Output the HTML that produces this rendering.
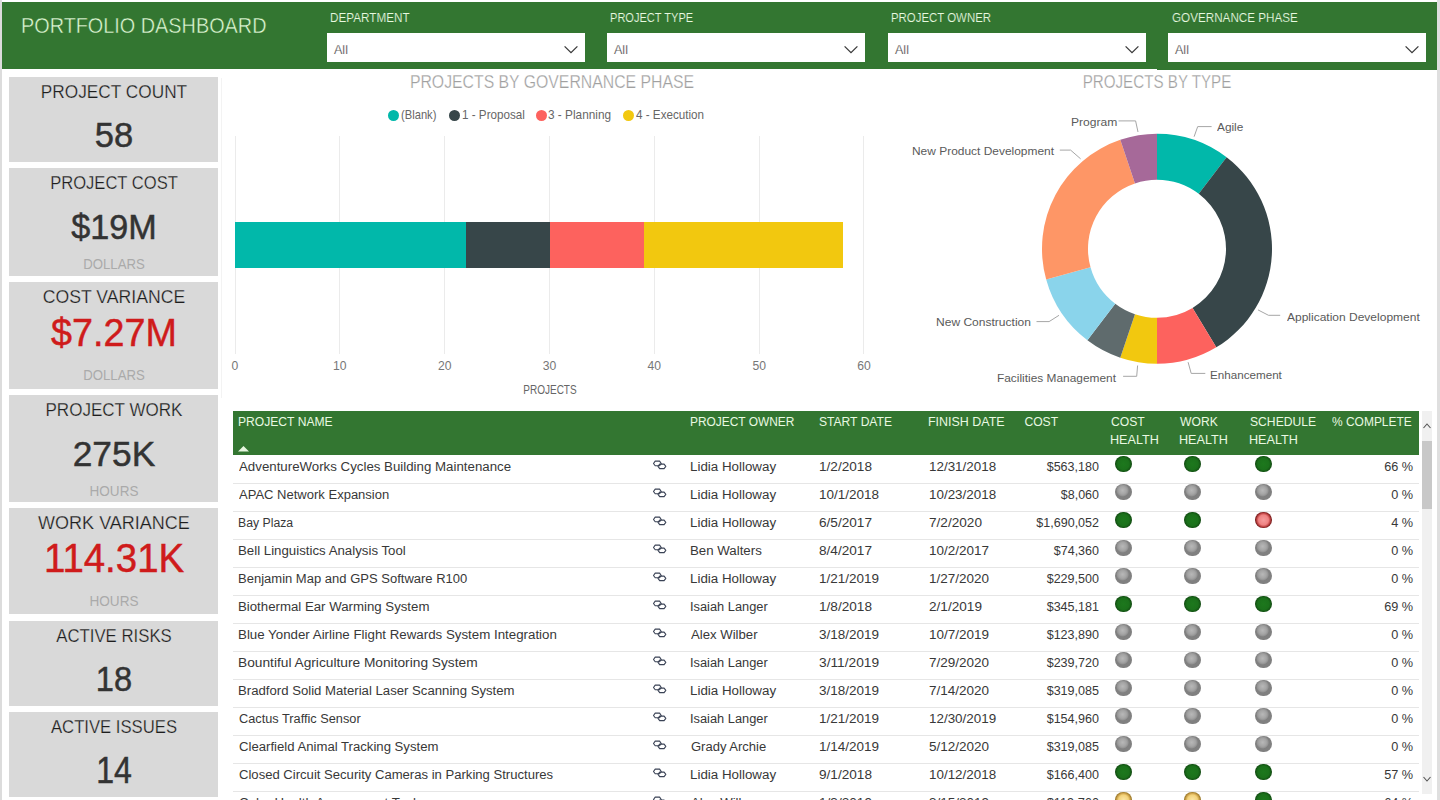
<!DOCTYPE html>
<html><head><meta charset="utf-8"><style>
html,body{margin:0;padding:0;}
body{width:1440px;height:800px;position:relative;overflow:hidden;background:#fff;font-family:"Liberation Sans", sans-serif;}
.t{position:absolute;white-space:nowrap;font-family:"Liberation Sans", sans-serif;}
</style></head><body>
<div style="position:absolute;left:0px;top:0px;width:2px;height:800px;background:#dcdcdc;"></div><div style="position:absolute;left:1437px;top:0px;width:3px;height:800px;background:#dfdfdf;"></div><div style="position:absolute;left:2px;top:2px;width:1435px;height:66.5px;background:#337631;"></div><div style="position:absolute;left:1157px;top:68px;width:280px;height:1.5px;background:#337631;"></div><div class="t" style="left:20.68px;top:14.78px;font-size:21.65px;line-height:21.65px;color:#e0fad6;transform:scaleX(0.9168);transform-origin:left;-webkit-text-stroke:0.45px #337631;paint-order:normal;">PORTFOLIO DASHBOARD</div><div class="t" style="left:329.65px;top:12.03px;font-size:12.29px;line-height:12.29px;color:#e8f9e0;transform:scaleX(0.9545);transform-origin:left;-webkit-text-stroke:0.15px #337631;">DEPARTMENT</div><div style="position:absolute;left:327px;top:33px;width:258px;height:29px;background:#ffffff;"></div><div class="t" style="left:334.00px;top:44.03px;font-size:12.29px;line-height:12.29px;color:#333;transform:scaleX(1.0217);transform-origin:left;-webkit-text-stroke:0.25px #fff;">All</div><svg style="position:absolute;left:561px;top:42px" width="20" height="14" viewBox="0 0 20 14"><path d="M3.6 4.4 L10 10.6 L16.4 4.4" fill="none" stroke="#3a3a3a" stroke-width="1.3"/></svg><div class="t" style="left:609.70px;top:12.03px;font-size:12.29px;line-height:12.29px;color:#e8f9e0;transform:scaleX(0.9005);transform-origin:left;-webkit-text-stroke:0.15px #337631;">PROJECT TYPE</div><div style="position:absolute;left:607px;top:33px;width:258px;height:29px;background:#ffffff;"></div><div class="t" style="left:614.00px;top:44.03px;font-size:12.29px;line-height:12.29px;color:#333;transform:scaleX(1.0217);transform-origin:left;-webkit-text-stroke:0.25px #fff;">All</div><svg style="position:absolute;left:841px;top:42px" width="20" height="14" viewBox="0 0 20 14"><path d="M3.6 4.4 L10 10.6 L16.4 4.4" fill="none" stroke="#3a3a3a" stroke-width="1.3"/></svg><div class="t" style="left:890.67px;top:12.03px;font-size:12.29px;line-height:12.29px;color:#e8f9e0;transform:scaleX(0.9295);transform-origin:left;-webkit-text-stroke:0.15px #337631;">PROJECT OWNER</div><div style="position:absolute;left:888px;top:33px;width:258px;height:29px;background:#ffffff;"></div><div class="t" style="left:895.00px;top:44.03px;font-size:12.29px;line-height:12.29px;color:#333;transform:scaleX(1.0217);transform-origin:left;-webkit-text-stroke:0.25px #fff;">All</div><svg style="position:absolute;left:1122px;top:42px" width="20" height="14" viewBox="0 0 20 14"><path d="M3.6 4.4 L10 10.6 L16.4 4.4" fill="none" stroke="#3a3a3a" stroke-width="1.3"/></svg><div class="t" style="left:1171.60px;top:12.03px;font-size:12.29px;line-height:12.29px;color:#e8f9e0;transform:scaleX(0.9508);transform-origin:left;-webkit-text-stroke:0.15px #337631;">GOVERNANCE PHASE</div><div style="position:absolute;left:1168px;top:33px;width:258px;height:29px;background:#ffffff;"></div><div class="t" style="left:1175.00px;top:44.03px;font-size:12.29px;line-height:12.29px;color:#333;transform:scaleX(1.0217);transform-origin:left;-webkit-text-stroke:0.25px #fff;">All</div><svg style="position:absolute;left:1402px;top:42px" width="20" height="14" viewBox="0 0 20 14"><path d="M3.6 4.4 L10 10.6 L16.4 4.4" fill="none" stroke="#3a3a3a" stroke-width="1.3"/></svg><div style="position:absolute;left:9px;top:77px;width:209px;height:85px;background:#d9d9d9;"></div><div style="position:absolute;left:9px;top:168px;width:209px;height:108px;background:#d9d9d9;"></div><div style="position:absolute;left:9px;top:282px;width:209px;height:107px;background:#d9d9d9;"></div><div style="position:absolute;left:9px;top:395px;width:209px;height:107px;background:#d9d9d9;"></div><div style="position:absolute;left:9px;top:508px;width:209px;height:106px;background:#d9d9d9;"></div><div style="position:absolute;left:9px;top:621px;width:209px;height:85px;background:#d9d9d9;"></div><div style="position:absolute;left:9px;top:712px;width:209px;height:85px;background:#d9d9d9;"></div><div class="t" style="left:-886.50px;width:2000px;text-align:center;top:84.07px;font-size:17.60px;line-height:17.60px;color:#1e1e1e;transform:scaleX(0.9807);transform-origin:center;-webkit-text-stroke:0.25px #d9d9d9;">PROJECT COUNT</div><div class="t" style="left:-886.50px;width:2000px;text-align:center;top:117.85px;font-size:35.75px;line-height:35.75px;color:#333;transform:scaleX(0.9661);transform-origin:center;-webkit-text-stroke:0.5px #333;">58</div><div class="t" style="left:-886.50px;width:2000px;text-align:center;top:175.07px;font-size:17.60px;line-height:17.60px;color:#1e1e1e;transform:scaleX(0.9421);transform-origin:center;-webkit-text-stroke:0.25px #d9d9d9;">PROJECT COST</div><div class="t" style="left:-886.50px;width:2000px;text-align:center;top:210.05px;font-size:35.75px;line-height:35.75px;color:#333;transform:scaleX(0.9556);transform-origin:center;-webkit-text-stroke:0.5px #333;">$19M</div><div class="t" style="left:-886.50px;width:2000px;text-align:center;top:256.39px;font-size:15.36px;line-height:15.36px;color:#aaaaaa;transform:scaleX(0.8572);transform-origin:center;">DOLLARS</div><div class="t" style="left:-886.50px;width:2000px;text-align:center;top:289.07px;font-size:17.60px;line-height:17.60px;color:#1e1e1e;transform:scaleX(1.0018);transform-origin:center;-webkit-text-stroke:0.25px #d9d9d9;">COST VARIANCE</div><div class="t" style="left:-886.50px;width:2000px;text-align:center;top:313.41px;font-size:39.53px;line-height:39.53px;color:#cf1b1b;transform:scaleX(0.9543);transform-origin:center;-webkit-text-stroke:0.5px #cf1b1b;">$7.27M</div><div class="t" style="left:-886.50px;width:2000px;text-align:center;top:367.39px;font-size:15.36px;line-height:15.36px;color:#aaaaaa;transform:scaleX(0.8572);transform-origin:center;">DOLLARS</div><div class="t" style="left:-886.50px;width:2000px;text-align:center;top:401.87px;font-size:17.60px;line-height:17.60px;color:#1e1e1e;transform:scaleX(0.9689);transform-origin:center;-webkit-text-stroke:0.25px #d9d9d9;">PROJECT WORK</div><div class="t" style="left:-886.50px;width:2000px;text-align:center;top:437.27px;font-size:35.61px;line-height:35.61px;color:#333;transform:scaleX(0.9926);transform-origin:center;-webkit-text-stroke:0.5px #333;">275K</div><div class="t" style="left:-886.50px;width:2000px;text-align:center;top:483.19px;font-size:15.36px;line-height:15.36px;color:#aaaaaa;transform:scaleX(0.8797);transform-origin:center;">HOURS</div><div class="t" style="left:-886.50px;width:2000px;text-align:center;top:514.77px;font-size:17.60px;line-height:17.60px;color:#1e1e1e;transform:scaleX(1.0237);transform-origin:center;-webkit-text-stroke:0.25px #d9d9d9;">WORK VARIANCE</div><div class="t" style="left:-886.50px;width:2000px;text-align:center;top:538.81px;font-size:40.22px;line-height:40.22px;color:#cf1b1b;transform:scaleX(0.9547);transform-origin:center;-webkit-text-stroke:0.5px #cf1b1b;">114.31K</div><div class="t" style="left:-886.50px;width:2000px;text-align:center;top:592.99px;font-size:15.36px;line-height:15.36px;color:#aaaaaa;transform:scaleX(0.8834);transform-origin:center;">HOURS</div><div class="t" style="left:-886.50px;width:2000px;text-align:center;top:628.07px;font-size:17.60px;line-height:17.60px;color:#1e1e1e;transform:scaleX(0.9527);transform-origin:center;-webkit-text-stroke:0.25px #d9d9d9;">ACTIVE RISKS</div><div class="t" style="left:-886.50px;width:2000px;text-align:center;top:661.73px;font-size:35.89px;line-height:35.89px;color:#333;transform:scaleX(0.9093);transform-origin:center;-webkit-text-stroke:0.5px #333;">18</div><div class="t" style="left:-886.50px;width:2000px;text-align:center;top:719.07px;font-size:17.60px;line-height:17.60px;color:#1e1e1e;transform:scaleX(0.9483);transform-origin:center;-webkit-text-stroke:0.25px #d9d9d9;">ACTIVE ISSUES</div><div class="t" style="left:-886.50px;width:2000px;text-align:center;top:752.53px;font-size:36.59px;line-height:36.59px;color:#333;transform:scaleX(0.8763);transform-origin:center;-webkit-text-stroke:0.5px #333;">14</div><div class="t" style="left:-448.50px;width:2000px;text-align:center;top:74.39px;font-size:17.46px;line-height:17.46px;color:#a0a0a0;transform:scaleX(0.9061);transform-origin:center;-webkit-text-stroke:0.25px #fff;">PROJECTS BY GOVERNANCE PHASE</div><div style="position:absolute;left:388px;top:109.7px;width:11px;height:11px;border-radius:50%;background:#01b8aa"></div><div class="t" style="left:400.80px;top:109.29px;font-size:12.57px;line-height:12.57px;color:#666;transform:scaleX(0.8897);transform-origin:left;">(Blank)</div><div style="position:absolute;left:448.5px;top:109.7px;width:11px;height:11px;border-radius:50%;background:#374649"></div><div class="t" style="left:461.50px;top:109.29px;font-size:12.57px;line-height:12.57px;color:#666;transform:scaleX(0.9288);transform-origin:left;">1 - Proposal</div><div style="position:absolute;left:535.8px;top:109.7px;width:11px;height:11px;border-radius:50%;background:#fd625e"></div><div class="t" style="left:548.00px;top:109.29px;font-size:12.57px;line-height:12.57px;color:#666;transform:scaleX(0.9405);transform-origin:left;">3 - Planning</div><div style="position:absolute;left:623px;top:109.7px;width:11px;height:11px;border-radius:50%;background:#f2c80f"></div><div class="t" style="left:636.00px;top:109.29px;font-size:12.57px;line-height:12.57px;color:#666;transform:scaleX(0.9283);transform-origin:left;">4 - Execution</div><div style="position:absolute;left:234.50px;top:136px;width:1px;height:218px;background:#ebebeb"></div><div class="t" style="left:-765.00px;width:2000px;text-align:center;top:360.15px;font-size:12.15px;line-height:12.15px;color:#777;">0</div><div style="position:absolute;left:339.33px;top:136px;width:1px;height:218px;background:#ebebeb"></div><div class="t" style="left:-660.17px;width:2000px;text-align:center;top:360.15px;font-size:12.15px;line-height:12.15px;color:#777;">10</div><div style="position:absolute;left:444.16px;top:136px;width:1px;height:218px;background:#ebebeb"></div><div class="t" style="left:-555.34px;width:2000px;text-align:center;top:360.15px;font-size:12.15px;line-height:12.15px;color:#777;">20</div><div style="position:absolute;left:548.99px;top:136px;width:1px;height:218px;background:#ebebeb"></div><div class="t" style="left:-450.51px;width:2000px;text-align:center;top:360.15px;font-size:12.15px;line-height:12.15px;color:#777;">30</div><div style="position:absolute;left:653.82px;top:136px;width:1px;height:218px;background:#ebebeb"></div><div class="t" style="left:-345.68px;width:2000px;text-align:center;top:360.15px;font-size:12.15px;line-height:12.15px;color:#777;">40</div><div style="position:absolute;left:758.65px;top:136px;width:1px;height:218px;background:#ebebeb"></div><div class="t" style="left:-240.85px;width:2000px;text-align:center;top:360.15px;font-size:12.15px;line-height:12.15px;color:#777;">50</div><div style="position:absolute;left:863.48px;top:136px;width:1px;height:218px;background:#ebebeb"></div><div class="t" style="left:-136.02px;width:2000px;text-align:center;top:360.15px;font-size:12.15px;line-height:12.15px;color:#777;">60</div><svg style="position:absolute;left:0;top:0" width="1440" height="800" shape-rendering="crispEdges"><rect x="235.00" y="222" width="231.23" height="46" fill="#01b8aa"/><rect x="465.63" y="222" width="84.47" height="46" fill="#374649"/><rect x="549.50" y="222" width="94.95" height="46" fill="#fd625e"/><rect x="643.85" y="222" width="198.88" height="46" fill="#f2c80f"/></svg><div class="t" style="left:-450.40px;width:2000px;text-align:center;top:384.02px;font-size:12.01px;line-height:12.01px;color:#666;transform:scaleX(0.8328);transform-origin:center;">PROJECTS</div><div class="t" style="left:157.00px;width:2000px;text-align:center;top:74.39px;font-size:17.46px;line-height:17.46px;color:#a0a0a0;transform:scaleX(0.8701);transform-origin:center;-webkit-text-stroke:0.25px #fff;">PROJECTS BY TYPE</div><svg style="position:absolute;left:0;top:0" width="1440" height="800"><path d="M1157.00,133.80 A115,115 0 0 1 1226.60,157.25 L1198.76,193.87 A69,69 0 0 0 1157.00,179.80 Z" fill="#01b8aa"/><path d="M1226.60,157.25 A115,115 0 0 1 1216.29,347.34 L1192.57,307.92 A69,69 0 0 0 1198.76,193.87 Z" fill="#374649"/><path d="M1216.29,347.34 A115,115 0 0 1 1157.00,363.80 L1157.00,317.80 A69,69 0 0 0 1192.57,307.92 Z" fill="#fd625e"/><path d="M1157.00,363.80 A115,115 0 0 1 1120.28,357.78 L1134.97,314.19 A69,69 0 0 0 1157.00,317.80 Z" fill="#f2c80f"/><path d="M1120.28,357.78 A115,115 0 0 1 1087.40,340.35 L1115.24,303.73 A69,69 0 0 0 1134.97,314.19 Z" fill="#5f6b6d"/><path d="M1087.40,340.35 A115,115 0 0 1 1046.19,279.57 L1090.52,267.26 A69,69 0 0 0 1115.24,303.73 Z" fill="#8ad4eb"/><path d="M1046.19,279.57 A115,115 0 0 1 1120.28,139.82 L1134.97,183.41 A69,69 0 0 0 1090.52,267.26 Z" fill="#fe9666"/><path d="M1120.28,139.82 A115,115 0 0 1 1157.00,133.80 L1157.00,179.80 A69,69 0 0 0 1134.97,183.41 Z" fill="#a66999"/></svg><svg style="position:absolute;left:0;top:0" width="1440" height="800"><polyline points="1194.1,136.7 1197.7,126.6 1211.6,126.6" fill="none" stroke="#a6a6a6" stroke-width="1"/><polyline points="1118.5,120.9 1135.6,120.9 1138.0,132.0" fill="none" stroke="#a6a6a6" stroke-width="1"/><polyline points="1059.8,150.1 1070.6,150.1 1080.6,158.8" fill="none" stroke="#a6a6a6" stroke-width="1"/><polyline points="1036.5,321.6 1049.1,321.6 1059.0,315.3" fill="none" stroke="#a6a6a6" stroke-width="1"/><polyline points="1123.1,376.3 1136.7,376.3 1137.6,365.5" fill="none" stroke="#a6a6a6" stroke-width="1"/><polyline points="1258.0,309.9 1268.5,315.3 1280.2,315.3" fill="none" stroke="#a6a6a6" stroke-width="1"/><polyline points="1188.1,362.2 1191.2,373.4 1205.3,373.4" fill="none" stroke="#a6a6a6" stroke-width="1"/></svg><div class="t" style="left:1216.70px;top:122.29px;font-size:11.17px;line-height:11.17px;color:#5a5a5a;transform:scaleX(1.0609);transform-origin:left;">Agile</div><div class="t" style="left:1071.20px;top:117.29px;font-size:11.17px;line-height:11.17px;color:#5a5a5a;transform:scaleX(1.0827);transform-origin:left;">Program</div><div class="t" style="left:911.70px;top:145.99px;font-size:11.17px;line-height:11.17px;color:#5a5a5a;transform:scaleX(1.0704);transform-origin:left;">New Product Development</div><div class="t" style="left:936.25px;top:317.09px;font-size:11.17px;line-height:11.17px;color:#5a5a5a;transform:scaleX(1.0786);transform-origin:left;">New Construction</div><div class="t" style="left:997.30px;top:373.09px;font-size:11.17px;line-height:11.17px;color:#5a5a5a;transform:scaleX(1.0657);transform-origin:left;">Facilities Management</div><div class="t" style="left:1286.50px;top:312.09px;font-size:11.17px;line-height:11.17px;color:#5a5a5a;transform:scaleX(1.0755);transform-origin:left;">Application Development</div><div class="t" style="left:1209.80px;top:369.99px;font-size:11.17px;line-height:11.17px;color:#5a5a5a;transform:scaleX(1.0438);transform-origin:left;">Enhancement</div><div style="position:absolute;left:220.5px;top:78px;width:1px;height:320px;background:#f3f3f3;"></div><div style="position:absolute;left:233px;top:411px;width:1186px;height:44px;background:#337631;"></div><div class="t" style="left:238.00px;top:415.95px;font-size:12.15px;line-height:12.15px;color:#e9f9e2;transform:scaleX(0.9972);transform-origin:left;">PROJECT NAME</div><div class="t" style="left:690.02px;top:415.95px;font-size:12.15px;line-height:12.15px;color:#e9f9e2;transform:scaleX(0.9820);transform-origin:left;">PROJECT OWNER</div><div class="t" style="left:819.00px;top:415.95px;font-size:12.15px;line-height:12.15px;color:#e9f9e2;transform:scaleX(0.9956);transform-origin:left;">START DATE</div><div class="t" style="left:927.97px;top:415.95px;font-size:12.15px;line-height:12.15px;color:#e9f9e2;transform:scaleX(1.0265);transform-origin:left;">FINISH DATE</div><div class="t" style="left:1024.40px;top:415.95px;font-size:12.15px;line-height:12.15px;color:#e9f9e2;">COST</div><div class="t" style="left:1111.00px;top:415.95px;font-size:12.15px;line-height:12.15px;color:#e9f9e2;">COST</div><div class="t" style="left:1109.96px;top:434.35px;font-size:12.15px;line-height:12.15px;color:#e9f9e2;transform:scaleX(1.0392);transform-origin:left;">HEALTH</div><div class="t" style="left:1180.00px;top:415.95px;font-size:12.15px;line-height:12.15px;color:#e9f9e2;">WORK</div><div class="t" style="left:1178.96px;top:434.35px;font-size:12.15px;line-height:12.15px;color:#e9f9e2;transform:scaleX(1.0392);transform-origin:left;">HEALTH</div><div class="t" style="left:1250.00px;top:415.95px;font-size:12.15px;line-height:12.15px;color:#e9f9e2;">SCHEDULE</div><div class="t" style="left:1248.96px;top:434.35px;font-size:12.15px;line-height:12.15px;color:#e9f9e2;transform:scaleX(1.0392);transform-origin:left;">HEALTH</div><div class="t" style="left:1331.70px;top:415.95px;font-size:12.15px;line-height:12.15px;color:#e9f9e2;transform:scaleX(0.9857);transform-origin:left;">% COMPLETE</div><svg style="position:absolute;left:237px;top:445px" width="13" height="7" viewBox="0 0 13 7"><path d="M1 6.5 L6.5 1 L12 6.5 Z" fill="#e6f6df"/></svg><div class="t" style="left:238.75px;top:460.57px;font-size:12.71px;line-height:12.71px;color:#383838;transform:scaleX(1.0451);transform-origin:left;">AdventureWorks Cycles Building Maintenance</div><svg style="position:absolute;left:651.5px;top:459.5px" width="16" height="11" viewBox="0 0 16 11"><path d="M3.2 1.1 H7.6 L9.3 3.45 L7.6 5.8 H3.2 L1.5 3.45 Z" fill="none" stroke="#3b4356" stroke-width="1.1" stroke-linejoin="round"/><path d="M7.7 4.1 H12.1 L13.8 6.35 L12.1 8.6 H7.7 L6 6.35 Z" fill="none" stroke="#3b4356" stroke-width="1.1" stroke-linejoin="round"/></svg><div class="t" style="left:690.25px;top:460.57px;font-size:12.71px;line-height:12.71px;color:#383838;transform:scaleX(1.0508);transform-origin:left;">Lidia Holloway</div><div class="t" style="left:819.10px;top:460.57px;font-size:12.71px;line-height:12.71px;color:#383838;transform:scaleX(1.0707);transform-origin:left;">1/2/2018</div><div class="t" style="left:929.20px;top:460.57px;font-size:12.71px;line-height:12.71px;color:#383838;transform:scaleX(1.0554);transform-origin:left;">12/31/2018</div><div class="t" style="left:-900.74px;width:2000px;text-align:right;top:460.57px;font-size:12.71px;line-height:12.71px;color:#383838;transform:scaleX(0.9879);transform-origin:right;">$563,180</div><div style="position:absolute;left:1115.00px;top:455.60px;width:16.8px;height:16.8px;border-radius:50%;background:radial-gradient(circle closest-side at 50% 50%, #1d781d 0%, #1b711b 70%, #165e16 90%, #124d12 100%)"></div><div style="position:absolute;left:1183.90px;top:455.60px;width:16.8px;height:16.8px;border-radius:50%;background:radial-gradient(circle closest-side at 50% 50%, #1d781d 0%, #1b711b 70%, #165e16 90%, #124d12 100%)"></div><div style="position:absolute;left:1254.90px;top:455.60px;width:16.8px;height:16.8px;border-radius:50%;background:radial-gradient(circle closest-side at 50% 50%, #1d781d 0%, #1b711b 70%, #165e16 90%, #124d12 100%)"></div><div class="t" style="left:-586.92px;width:2000px;text-align:right;top:460.57px;font-size:12.71px;line-height:12.71px;color:#383838;">66 %</div><div style="position:absolute;left:233px;top:483px;width:1186px;height:1px;background:#e6e6e6;"></div><div class="t" style="left:238.75px;top:488.57px;font-size:12.71px;line-height:12.71px;color:#383838;transform:scaleX(1.0247);transform-origin:left;">APAC Network Expansion</div><svg style="position:absolute;left:651.5px;top:487.5px" width="16" height="11" viewBox="0 0 16 11"><path d="M3.2 1.1 H7.6 L9.3 3.45 L7.6 5.8 H3.2 L1.5 3.45 Z" fill="none" stroke="#3b4356" stroke-width="1.1" stroke-linejoin="round"/><path d="M7.7 4.1 H12.1 L13.8 6.35 L12.1 8.6 H7.7 L6 6.35 Z" fill="none" stroke="#3b4356" stroke-width="1.1" stroke-linejoin="round"/></svg><div class="t" style="left:690.25px;top:488.57px;font-size:12.71px;line-height:12.71px;color:#383838;transform:scaleX(1.0508);transform-origin:left;">Lidia Holloway</div><div class="t" style="left:819.10px;top:488.57px;font-size:12.71px;line-height:12.71px;color:#383838;transform:scaleX(1.0621);transform-origin:left;">10/1/2018</div><div class="t" style="left:929.20px;top:488.57px;font-size:12.71px;line-height:12.71px;color:#383838;transform:scaleX(1.0554);transform-origin:left;">10/23/2018</div><div class="t" style="left:-900.74px;width:2000px;text-align:right;top:488.57px;font-size:12.71px;line-height:12.71px;color:#383838;transform:scaleX(0.9827);transform-origin:right;">$8,060</div><div style="position:absolute;left:1115.00px;top:483.60px;width:16.8px;height:16.8px;border-radius:50%;background:radial-gradient(circle closest-side at 45% 40%, #b8b8b8 0%, #a5a5a5 60%, #949494 85%, #808080 100%)"></div><div style="position:absolute;left:1183.90px;top:483.60px;width:16.8px;height:16.8px;border-radius:50%;background:radial-gradient(circle closest-side at 45% 40%, #b8b8b8 0%, #a5a5a5 60%, #949494 85%, #808080 100%)"></div><div style="position:absolute;left:1254.90px;top:483.60px;width:16.8px;height:16.8px;border-radius:50%;background:radial-gradient(circle closest-side at 45% 40%, #b8b8b8 0%, #a5a5a5 60%, #949494 85%, #808080 100%)"></div><div class="t" style="left:-586.92px;width:2000px;text-align:right;top:488.57px;font-size:12.71px;line-height:12.71px;color:#383838;">0 %</div><div style="position:absolute;left:233px;top:511px;width:1186px;height:1px;background:#e6e6e6;"></div><div class="t" style="left:237.79px;top:516.57px;font-size:12.71px;line-height:12.71px;color:#383838;transform:scaleX(0.9638);transform-origin:left;">Bay Plaza</div><svg style="position:absolute;left:651.5px;top:515.5px" width="16" height="11" viewBox="0 0 16 11"><path d="M3.2 1.1 H7.6 L9.3 3.45 L7.6 5.8 H3.2 L1.5 3.45 Z" fill="none" stroke="#3b4356" stroke-width="1.1" stroke-linejoin="round"/><path d="M7.7 4.1 H12.1 L13.8 6.35 L12.1 8.6 H7.7 L6 6.35 Z" fill="none" stroke="#3b4356" stroke-width="1.1" stroke-linejoin="round"/></svg><div class="t" style="left:690.25px;top:516.57px;font-size:12.71px;line-height:12.71px;color:#383838;transform:scaleX(1.0508);transform-origin:left;">Lidia Holloway</div><div class="t" style="left:819.10px;top:516.57px;font-size:12.71px;line-height:12.71px;color:#383838;transform:scaleX(1.0707);transform-origin:left;">6/5/2017</div><div class="t" style="left:929.20px;top:516.57px;font-size:12.71px;line-height:12.71px;color:#383838;transform:scaleX(1.0707);transform-origin:left;">7/2/2020</div><div class="t" style="left:-900.74px;width:2000px;text-align:right;top:516.57px;font-size:12.71px;line-height:12.71px;color:#383838;transform:scaleX(0.9858);transform-origin:right;">$1,690,052</div><div style="position:absolute;left:1115.00px;top:511.60px;width:16.8px;height:16.8px;border-radius:50%;background:radial-gradient(circle closest-side at 50% 50%, #1d781d 0%, #1b711b 70%, #165e16 90%, #124d12 100%)"></div><div style="position:absolute;left:1183.90px;top:511.60px;width:16.8px;height:16.8px;border-radius:50%;background:radial-gradient(circle closest-side at 50% 50%, #1d781d 0%, #1b711b 70%, #165e16 90%, #124d12 100%)"></div><div style="position:absolute;left:1254.90px;top:511.60px;width:16.8px;height:16.8px;border-radius:50%;background:radial-gradient(circle closest-side at 50% 50%, #f59c9c 0%, #ef8282 62%, #c04545 84%, #7a1c1c 100%)"></div><div class="t" style="left:-586.92px;width:2000px;text-align:right;top:516.57px;font-size:12.71px;line-height:12.71px;color:#383838;">4 %</div><div style="position:absolute;left:233px;top:539px;width:1186px;height:1px;background:#e6e6e6;"></div><div class="t" style="left:237.71px;top:544.57px;font-size:12.71px;line-height:12.71px;color:#383838;transform:scaleX(1.0437);transform-origin:left;">Bell Linguistics Analysis Tool</div><svg style="position:absolute;left:651.5px;top:543.5px" width="16" height="11" viewBox="0 0 16 11"><path d="M3.2 1.1 H7.6 L9.3 3.45 L7.6 5.8 H3.2 L1.5 3.45 Z" fill="none" stroke="#3b4356" stroke-width="1.1" stroke-linejoin="round"/><path d="M7.7 4.1 H12.1 L13.8 6.35 L12.1 8.6 H7.7 L6 6.35 Z" fill="none" stroke="#3b4356" stroke-width="1.1" stroke-linejoin="round"/></svg><div class="t" style="left:690.26px;top:544.57px;font-size:12.71px;line-height:12.71px;color:#383838;transform:scaleX(1.0448);transform-origin:left;">Ben Walters</div><div class="t" style="left:819.10px;top:544.57px;font-size:12.71px;line-height:12.71px;color:#383838;transform:scaleX(1.0707);transform-origin:left;">8/4/2017</div><div class="t" style="left:929.20px;top:544.57px;font-size:12.71px;line-height:12.71px;color:#383838;transform:scaleX(1.0621);transform-origin:left;">10/2/2017</div><div class="t" style="left:-900.74px;width:2000px;text-align:right;top:544.57px;font-size:12.71px;line-height:12.71px;color:#383838;transform:scaleX(0.9857);transform-origin:right;">$74,360</div><div style="position:absolute;left:1115.00px;top:539.60px;width:16.8px;height:16.8px;border-radius:50%;background:radial-gradient(circle closest-side at 45% 40%, #b8b8b8 0%, #a5a5a5 60%, #949494 85%, #808080 100%)"></div><div style="position:absolute;left:1183.90px;top:539.60px;width:16.8px;height:16.8px;border-radius:50%;background:radial-gradient(circle closest-side at 45% 40%, #b8b8b8 0%, #a5a5a5 60%, #949494 85%, #808080 100%)"></div><div style="position:absolute;left:1254.90px;top:539.60px;width:16.8px;height:16.8px;border-radius:50%;background:radial-gradient(circle closest-side at 45% 40%, #b8b8b8 0%, #a5a5a5 60%, #949494 85%, #808080 100%)"></div><div class="t" style="left:-586.92px;width:2000px;text-align:right;top:544.57px;font-size:12.71px;line-height:12.71px;color:#383838;">0 %</div><div style="position:absolute;left:233px;top:567px;width:1186px;height:1px;background:#e6e6e6;"></div><div class="t" style="left:237.73px;top:572.57px;font-size:12.71px;line-height:12.71px;color:#383838;transform:scaleX(1.0245);transform-origin:left;">Benjamin Map and GPS Software R100</div><svg style="position:absolute;left:651.5px;top:571.5px" width="16" height="11" viewBox="0 0 16 11"><path d="M3.2 1.1 H7.6 L9.3 3.45 L7.6 5.8 H3.2 L1.5 3.45 Z" fill="none" stroke="#3b4356" stroke-width="1.1" stroke-linejoin="round"/><path d="M7.7 4.1 H12.1 L13.8 6.35 L12.1 8.6 H7.7 L6 6.35 Z" fill="none" stroke="#3b4356" stroke-width="1.1" stroke-linejoin="round"/></svg><div class="t" style="left:690.25px;top:572.57px;font-size:12.71px;line-height:12.71px;color:#383838;transform:scaleX(1.0508);transform-origin:left;">Lidia Holloway</div><div class="t" style="left:819.10px;top:572.57px;font-size:12.71px;line-height:12.71px;color:#383838;transform:scaleX(1.0621);transform-origin:left;">1/21/2019</div><div class="t" style="left:929.20px;top:572.57px;font-size:12.71px;line-height:12.71px;color:#383838;transform:scaleX(1.0621);transform-origin:left;">1/27/2020</div><div class="t" style="left:-900.74px;width:2000px;text-align:right;top:572.57px;font-size:12.71px;line-height:12.71px;color:#383838;transform:scaleX(0.9879);transform-origin:right;">$229,500</div><div style="position:absolute;left:1115.00px;top:567.60px;width:16.8px;height:16.8px;border-radius:50%;background:radial-gradient(circle closest-side at 45% 40%, #b8b8b8 0%, #a5a5a5 60%, #949494 85%, #808080 100%)"></div><div style="position:absolute;left:1183.90px;top:567.60px;width:16.8px;height:16.8px;border-radius:50%;background:radial-gradient(circle closest-side at 45% 40%, #b8b8b8 0%, #a5a5a5 60%, #949494 85%, #808080 100%)"></div><div style="position:absolute;left:1254.90px;top:567.60px;width:16.8px;height:16.8px;border-radius:50%;background:radial-gradient(circle closest-side at 45% 40%, #b8b8b8 0%, #a5a5a5 60%, #949494 85%, #808080 100%)"></div><div class="t" style="left:-586.92px;width:2000px;text-align:right;top:572.57px;font-size:12.71px;line-height:12.71px;color:#383838;">0 %</div><div style="position:absolute;left:233px;top:595px;width:1186px;height:1px;background:#e6e6e6;"></div><div class="t" style="left:237.71px;top:600.57px;font-size:12.71px;line-height:12.71px;color:#383838;transform:scaleX(1.0416);transform-origin:left;">Biothermal Ear Warming System</div><svg style="position:absolute;left:651.5px;top:599.5px" width="16" height="11" viewBox="0 0 16 11"><path d="M3.2 1.1 H7.6 L9.3 3.45 L7.6 5.8 H3.2 L1.5 3.45 Z" fill="none" stroke="#3b4356" stroke-width="1.1" stroke-linejoin="round"/><path d="M7.7 4.1 H12.1 L13.8 6.35 L12.1 8.6 H7.7 L6 6.35 Z" fill="none" stroke="#3b4356" stroke-width="1.1" stroke-linejoin="round"/></svg><div class="t" style="left:690.29px;top:600.57px;font-size:12.71px;line-height:12.71px;color:#383838;transform:scaleX(1.0096);transform-origin:left;">Isaiah Langer</div><div class="t" style="left:819.10px;top:600.57px;font-size:12.71px;line-height:12.71px;color:#383838;transform:scaleX(1.0707);transform-origin:left;">1/8/2018</div><div class="t" style="left:929.20px;top:600.57px;font-size:12.71px;line-height:12.71px;color:#383838;transform:scaleX(1.0707);transform-origin:left;">2/1/2019</div><div class="t" style="left:-900.74px;width:2000px;text-align:right;top:600.57px;font-size:12.71px;line-height:12.71px;color:#383838;transform:scaleX(0.9879);transform-origin:right;">$345,181</div><div style="position:absolute;left:1115.00px;top:595.60px;width:16.8px;height:16.8px;border-radius:50%;background:radial-gradient(circle closest-side at 50% 50%, #1d781d 0%, #1b711b 70%, #165e16 90%, #124d12 100%)"></div><div style="position:absolute;left:1183.90px;top:595.60px;width:16.8px;height:16.8px;border-radius:50%;background:radial-gradient(circle closest-side at 50% 50%, #1d781d 0%, #1b711b 70%, #165e16 90%, #124d12 100%)"></div><div style="position:absolute;left:1254.90px;top:595.60px;width:16.8px;height:16.8px;border-radius:50%;background:radial-gradient(circle closest-side at 50% 50%, #1d781d 0%, #1b711b 70%, #165e16 90%, #124d12 100%)"></div><div class="t" style="left:-586.92px;width:2000px;text-align:right;top:600.57px;font-size:12.71px;line-height:12.71px;color:#383838;">69 %</div><div style="position:absolute;left:233px;top:623px;width:1186px;height:1px;background:#e6e6e6;"></div><div class="t" style="left:237.70px;top:628.57px;font-size:12.71px;line-height:12.71px;color:#383838;transform:scaleX(1.0478);transform-origin:left;">Blue Yonder Airline Flight Rewards System Integration</div><svg style="position:absolute;left:651.5px;top:627.5px" width="16" height="11" viewBox="0 0 16 11"><path d="M3.2 1.1 H7.6 L9.3 3.45 L7.6 5.8 H3.2 L1.5 3.45 Z" fill="none" stroke="#3b4356" stroke-width="1.1" stroke-linejoin="round"/><path d="M7.7 4.1 H12.1 L13.8 6.35 L12.1 8.6 H7.7 L6 6.35 Z" fill="none" stroke="#3b4356" stroke-width="1.1" stroke-linejoin="round"/></svg><div class="t" style="left:691.30px;top:628.57px;font-size:12.71px;line-height:12.71px;color:#383838;transform:scaleX(1.0365);transform-origin:left;">Alex Wilber</div><div class="t" style="left:819.10px;top:628.57px;font-size:12.71px;line-height:12.71px;color:#383838;transform:scaleX(1.0621);transform-origin:left;">3/18/2019</div><div class="t" style="left:929.20px;top:628.57px;font-size:12.71px;line-height:12.71px;color:#383838;transform:scaleX(1.0621);transform-origin:left;">10/7/2019</div><div class="t" style="left:-900.74px;width:2000px;text-align:right;top:628.57px;font-size:12.71px;line-height:12.71px;color:#383838;transform:scaleX(0.9879);transform-origin:right;">$123,890</div><div style="position:absolute;left:1115.00px;top:623.60px;width:16.8px;height:16.8px;border-radius:50%;background:radial-gradient(circle closest-side at 45% 40%, #b8b8b8 0%, #a5a5a5 60%, #949494 85%, #808080 100%)"></div><div style="position:absolute;left:1183.90px;top:623.60px;width:16.8px;height:16.8px;border-radius:50%;background:radial-gradient(circle closest-side at 45% 40%, #b8b8b8 0%, #a5a5a5 60%, #949494 85%, #808080 100%)"></div><div style="position:absolute;left:1254.90px;top:623.60px;width:16.8px;height:16.8px;border-radius:50%;background:radial-gradient(circle closest-side at 45% 40%, #b8b8b8 0%, #a5a5a5 60%, #949494 85%, #808080 100%)"></div><div class="t" style="left:-586.92px;width:2000px;text-align:right;top:628.57px;font-size:12.71px;line-height:12.71px;color:#383838;">0 %</div><div style="position:absolute;left:233px;top:651px;width:1186px;height:1px;background:#e6e6e6;"></div><div class="t" style="left:237.67px;top:656.57px;font-size:12.71px;line-height:12.71px;color:#383838;transform:scaleX(1.0807);transform-origin:left;">Bountiful Agriculture Monitoring System</div><svg style="position:absolute;left:651.5px;top:655.5px" width="16" height="11" viewBox="0 0 16 11"><path d="M3.2 1.1 H7.6 L9.3 3.45 L7.6 5.8 H3.2 L1.5 3.45 Z" fill="none" stroke="#3b4356" stroke-width="1.1" stroke-linejoin="round"/><path d="M7.7 4.1 H12.1 L13.8 6.35 L12.1 8.6 H7.7 L6 6.35 Z" fill="none" stroke="#3b4356" stroke-width="1.1" stroke-linejoin="round"/></svg><div class="t" style="left:690.29px;top:656.57px;font-size:12.71px;line-height:12.71px;color:#383838;transform:scaleX(1.0096);transform-origin:left;">Isaiah Langer</div><div class="t" style="left:819.10px;top:656.57px;font-size:12.71px;line-height:12.71px;color:#383838;transform:scaleX(1.0802);transform-origin:left;">3/11/2019</div><div class="t" style="left:929.20px;top:656.57px;font-size:12.71px;line-height:12.71px;color:#383838;transform:scaleX(1.0621);transform-origin:left;">7/29/2020</div><div class="t" style="left:-900.74px;width:2000px;text-align:right;top:656.57px;font-size:12.71px;line-height:12.71px;color:#383838;transform:scaleX(0.9879);transform-origin:right;">$239,720</div><div style="position:absolute;left:1115.00px;top:651.60px;width:16.8px;height:16.8px;border-radius:50%;background:radial-gradient(circle closest-side at 45% 40%, #b8b8b8 0%, #a5a5a5 60%, #949494 85%, #808080 100%)"></div><div style="position:absolute;left:1183.90px;top:651.60px;width:16.8px;height:16.8px;border-radius:50%;background:radial-gradient(circle closest-side at 45% 40%, #b8b8b8 0%, #a5a5a5 60%, #949494 85%, #808080 100%)"></div><div style="position:absolute;left:1254.90px;top:651.60px;width:16.8px;height:16.8px;border-radius:50%;background:radial-gradient(circle closest-side at 45% 40%, #b8b8b8 0%, #a5a5a5 60%, #949494 85%, #808080 100%)"></div><div class="t" style="left:-586.92px;width:2000px;text-align:right;top:656.57px;font-size:12.71px;line-height:12.71px;color:#383838;">0 %</div><div style="position:absolute;left:233px;top:679px;width:1186px;height:1px;background:#e6e6e6;"></div><div class="t" style="left:237.71px;top:684.57px;font-size:12.71px;line-height:12.71px;color:#383838;transform:scaleX(1.0360);transform-origin:left;">Bradford Solid Material Laser Scanning System</div><svg style="position:absolute;left:651.5px;top:683.5px" width="16" height="11" viewBox="0 0 16 11"><path d="M3.2 1.1 H7.6 L9.3 3.45 L7.6 5.8 H3.2 L1.5 3.45 Z" fill="none" stroke="#3b4356" stroke-width="1.1" stroke-linejoin="round"/><path d="M7.7 4.1 H12.1 L13.8 6.35 L12.1 8.6 H7.7 L6 6.35 Z" fill="none" stroke="#3b4356" stroke-width="1.1" stroke-linejoin="round"/></svg><div class="t" style="left:690.25px;top:684.57px;font-size:12.71px;line-height:12.71px;color:#383838;transform:scaleX(1.0508);transform-origin:left;">Lidia Holloway</div><div class="t" style="left:819.10px;top:684.57px;font-size:12.71px;line-height:12.71px;color:#383838;transform:scaleX(1.0621);transform-origin:left;">3/18/2019</div><div class="t" style="left:929.20px;top:684.57px;font-size:12.71px;line-height:12.71px;color:#383838;transform:scaleX(1.0621);transform-origin:left;">7/14/2020</div><div class="t" style="left:-900.74px;width:2000px;text-align:right;top:684.57px;font-size:12.71px;line-height:12.71px;color:#383838;transform:scaleX(0.9879);transform-origin:right;">$319,085</div><div style="position:absolute;left:1115.00px;top:679.60px;width:16.8px;height:16.8px;border-radius:50%;background:radial-gradient(circle closest-side at 45% 40%, #b8b8b8 0%, #a5a5a5 60%, #949494 85%, #808080 100%)"></div><div style="position:absolute;left:1183.90px;top:679.60px;width:16.8px;height:16.8px;border-radius:50%;background:radial-gradient(circle closest-side at 45% 40%, #b8b8b8 0%, #a5a5a5 60%, #949494 85%, #808080 100%)"></div><div style="position:absolute;left:1254.90px;top:679.60px;width:16.8px;height:16.8px;border-radius:50%;background:radial-gradient(circle closest-side at 45% 40%, #b8b8b8 0%, #a5a5a5 60%, #949494 85%, #808080 100%)"></div><div class="t" style="left:-586.92px;width:2000px;text-align:right;top:684.57px;font-size:12.71px;line-height:12.71px;color:#383838;">0 %</div><div style="position:absolute;left:233px;top:707px;width:1186px;height:1px;background:#e6e6e6;"></div><div class="t" style="left:238.75px;top:712.57px;font-size:12.71px;line-height:12.71px;color:#383838;transform:scaleX(1.0036);transform-origin:left;">Cactus Traffic Sensor</div><svg style="position:absolute;left:651.5px;top:711.5px" width="16" height="11" viewBox="0 0 16 11"><path d="M3.2 1.1 H7.6 L9.3 3.45 L7.6 5.8 H3.2 L1.5 3.45 Z" fill="none" stroke="#3b4356" stroke-width="1.1" stroke-linejoin="round"/><path d="M7.7 4.1 H12.1 L13.8 6.35 L12.1 8.6 H7.7 L6 6.35 Z" fill="none" stroke="#3b4356" stroke-width="1.1" stroke-linejoin="round"/></svg><div class="t" style="left:690.29px;top:712.57px;font-size:12.71px;line-height:12.71px;color:#383838;transform:scaleX(1.0096);transform-origin:left;">Isaiah Langer</div><div class="t" style="left:819.10px;top:712.57px;font-size:12.71px;line-height:12.71px;color:#383838;transform:scaleX(1.0621);transform-origin:left;">1/21/2019</div><div class="t" style="left:929.20px;top:712.57px;font-size:12.71px;line-height:12.71px;color:#383838;transform:scaleX(1.0554);transform-origin:left;">12/30/2019</div><div class="t" style="left:-900.74px;width:2000px;text-align:right;top:712.57px;font-size:12.71px;line-height:12.71px;color:#383838;transform:scaleX(0.9879);transform-origin:right;">$154,960</div><div style="position:absolute;left:1115.00px;top:707.60px;width:16.8px;height:16.8px;border-radius:50%;background:radial-gradient(circle closest-side at 45% 40%, #b8b8b8 0%, #a5a5a5 60%, #949494 85%, #808080 100%)"></div><div style="position:absolute;left:1183.90px;top:707.60px;width:16.8px;height:16.8px;border-radius:50%;background:radial-gradient(circle closest-side at 45% 40%, #b8b8b8 0%, #a5a5a5 60%, #949494 85%, #808080 100%)"></div><div style="position:absolute;left:1254.90px;top:707.60px;width:16.8px;height:16.8px;border-radius:50%;background:radial-gradient(circle closest-side at 45% 40%, #b8b8b8 0%, #a5a5a5 60%, #949494 85%, #808080 100%)"></div><div class="t" style="left:-586.92px;width:2000px;text-align:right;top:712.57px;font-size:12.71px;line-height:12.71px;color:#383838;">0 %</div><div style="position:absolute;left:233px;top:735px;width:1186px;height:1px;background:#e6e6e6;"></div><div class="t" style="left:238.75px;top:740.57px;font-size:12.71px;line-height:12.71px;color:#383838;transform:scaleX(1.0347);transform-origin:left;">Clearfield Animal Tracking System</div><svg style="position:absolute;left:651.5px;top:739.5px" width="16" height="11" viewBox="0 0 16 11"><path d="M3.2 1.1 H7.6 L9.3 3.45 L7.6 5.8 H3.2 L1.5 3.45 Z" fill="none" stroke="#3b4356" stroke-width="1.1" stroke-linejoin="round"/><path d="M7.7 4.1 H12.1 L13.8 6.35 L12.1 8.6 H7.7 L6 6.35 Z" fill="none" stroke="#3b4356" stroke-width="1.1" stroke-linejoin="round"/></svg><div class="t" style="left:691.30px;top:740.57px;font-size:12.71px;line-height:12.71px;color:#383838;transform:scaleX(1.0246);transform-origin:left;">Grady Archie</div><div class="t" style="left:819.10px;top:740.57px;font-size:12.71px;line-height:12.71px;color:#383838;transform:scaleX(1.0621);transform-origin:left;">1/14/2019</div><div class="t" style="left:929.20px;top:740.57px;font-size:12.71px;line-height:12.71px;color:#383838;transform:scaleX(1.0621);transform-origin:left;">5/12/2020</div><div class="t" style="left:-900.74px;width:2000px;text-align:right;top:740.57px;font-size:12.71px;line-height:12.71px;color:#383838;transform:scaleX(0.9879);transform-origin:right;">$319,085</div><div style="position:absolute;left:1115.00px;top:735.60px;width:16.8px;height:16.8px;border-radius:50%;background:radial-gradient(circle closest-side at 45% 40%, #b8b8b8 0%, #a5a5a5 60%, #949494 85%, #808080 100%)"></div><div style="position:absolute;left:1183.90px;top:735.60px;width:16.8px;height:16.8px;border-radius:50%;background:radial-gradient(circle closest-side at 45% 40%, #b8b8b8 0%, #a5a5a5 60%, #949494 85%, #808080 100%)"></div><div style="position:absolute;left:1254.90px;top:735.60px;width:16.8px;height:16.8px;border-radius:50%;background:radial-gradient(circle closest-side at 45% 40%, #b8b8b8 0%, #a5a5a5 60%, #949494 85%, #808080 100%)"></div><div class="t" style="left:-586.92px;width:2000px;text-align:right;top:740.57px;font-size:12.71px;line-height:12.71px;color:#383838;">0 %</div><div style="position:absolute;left:233px;top:763px;width:1186px;height:1px;background:#e6e6e6;"></div><div class="t" style="left:238.75px;top:768.57px;font-size:12.71px;line-height:12.71px;color:#383838;transform:scaleX(1.0299);transform-origin:left;">Closed Circuit Security Cameras in Parking Structures</div><svg style="position:absolute;left:651.5px;top:767.5px" width="16" height="11" viewBox="0 0 16 11"><path d="M3.2 1.1 H7.6 L9.3 3.45 L7.6 5.8 H3.2 L1.5 3.45 Z" fill="none" stroke="#3b4356" stroke-width="1.1" stroke-linejoin="round"/><path d="M7.7 4.1 H12.1 L13.8 6.35 L12.1 8.6 H7.7 L6 6.35 Z" fill="none" stroke="#3b4356" stroke-width="1.1" stroke-linejoin="round"/></svg><div class="t" style="left:690.25px;top:768.57px;font-size:12.71px;line-height:12.71px;color:#383838;transform:scaleX(1.0508);transform-origin:left;">Lidia Holloway</div><div class="t" style="left:819.10px;top:768.57px;font-size:12.71px;line-height:12.71px;color:#383838;transform:scaleX(1.0707);transform-origin:left;">9/1/2018</div><div class="t" style="left:929.20px;top:768.57px;font-size:12.71px;line-height:12.71px;color:#383838;transform:scaleX(1.0554);transform-origin:left;">10/12/2018</div><div class="t" style="left:-900.74px;width:2000px;text-align:right;top:768.57px;font-size:12.71px;line-height:12.71px;color:#383838;transform:scaleX(0.9879);transform-origin:right;">$166,400</div><div style="position:absolute;left:1115.00px;top:763.60px;width:16.8px;height:16.8px;border-radius:50%;background:radial-gradient(circle closest-side at 50% 50%, #1d781d 0%, #1b711b 70%, #165e16 90%, #124d12 100%)"></div><div style="position:absolute;left:1183.90px;top:763.60px;width:16.8px;height:16.8px;border-radius:50%;background:radial-gradient(circle closest-side at 50% 50%, #1d781d 0%, #1b711b 70%, #165e16 90%, #124d12 100%)"></div><div style="position:absolute;left:1254.90px;top:763.60px;width:16.8px;height:16.8px;border-radius:50%;background:radial-gradient(circle closest-side at 50% 50%, #1d781d 0%, #1b711b 70%, #165e16 90%, #124d12 100%)"></div><div class="t" style="left:-586.92px;width:2000px;text-align:right;top:768.57px;font-size:12.71px;line-height:12.71px;color:#383838;">57 %</div><div style="position:absolute;left:233px;top:791px;width:1186px;height:1px;background:#e6e6e6;"></div><div class="t" style="left:238.75px;top:796.57px;font-size:12.71px;line-height:12.71px;color:#383838;transform:scaleX(1.046);transform-origin:left;">Coho Health Assessment Tool</div><svg style="position:absolute;left:651.5px;top:795.5px" width="16" height="11" viewBox="0 0 16 11"><path d="M3.2 1.1 H7.6 L9.3 3.45 L7.6 5.8 H3.2 L1.5 3.45 Z" fill="none" stroke="#3b4356" stroke-width="1.1" stroke-linejoin="round"/><path d="M7.7 4.1 H12.1 L13.8 6.35 L12.1 8.6 H7.7 L6 6.35 Z" fill="none" stroke="#3b4356" stroke-width="1.1" stroke-linejoin="round"/></svg><div class="t" style="left:691.30px;top:796.57px;font-size:12.71px;line-height:12.71px;color:#383838;transform:scaleX(1.0365);transform-origin:left;">Alex Wilber</div><div class="t" style="left:819.10px;top:796.57px;font-size:12.71px;line-height:12.71px;color:#383838;transform:scaleX(1.0707);transform-origin:left;">1/3/2019</div><div class="t" style="left:929.20px;top:796.57px;font-size:12.71px;line-height:12.71px;color:#383838;transform:scaleX(1.0621);transform-origin:left;">3/15/2019</div><div class="t" style="left:-900.74px;width:2000px;text-align:right;top:796.57px;font-size:12.71px;line-height:12.71px;color:#383838;transform:scaleX(1.0058);transform-origin:right;">$119,760</div><div style="position:absolute;left:1115.00px;top:791.60px;width:16.8px;height:16.8px;border-radius:50%;background:radial-gradient(circle closest-side at 50% 50%, #fbe7a8 0%, #f3d27a 62%, #cda24a 84%, #9c7a2a 100%)"></div><div style="position:absolute;left:1183.90px;top:791.60px;width:16.8px;height:16.8px;border-radius:50%;background:radial-gradient(circle closest-side at 50% 50%, #fbe7a8 0%, #f3d27a 62%, #cda24a 84%, #9c7a2a 100%)"></div><div style="position:absolute;left:1254.90px;top:791.60px;width:16.8px;height:16.8px;border-radius:50%;background:radial-gradient(circle closest-side at 50% 50%, #1d781d 0%, #1b711b 70%, #165e16 90%, #124d12 100%)"></div><div class="t" style="left:-586.92px;width:2000px;text-align:right;top:796.57px;font-size:12.71px;line-height:12.71px;color:#383838;">64 %</div><div style="position:absolute;left:233px;top:819px;width:1186px;height:1px;background:#e6e6e6;"></div><div style="position:absolute;left:1422px;top:411px;width:10px;height:383px;background:#f0f0f0;"></div><div style="position:absolute;left:1422px;top:441px;width:10px;height:68px;background:#c8c8c8;"></div><svg style="position:absolute;left:1422px;top:422px" width="10" height="8" viewBox="0 0 10 8"><path d="M1.5 6 L5 2 L8.5 6" fill="none" stroke="#555" stroke-width="1.1"/></svg><svg style="position:absolute;left:1422px;top:775px" width="10" height="8" viewBox="0 0 10 8"><path d="M1.5 2 L5 6 L8.5 2" fill="none" stroke="#555" stroke-width="1.1"/></svg>
</body></html>
